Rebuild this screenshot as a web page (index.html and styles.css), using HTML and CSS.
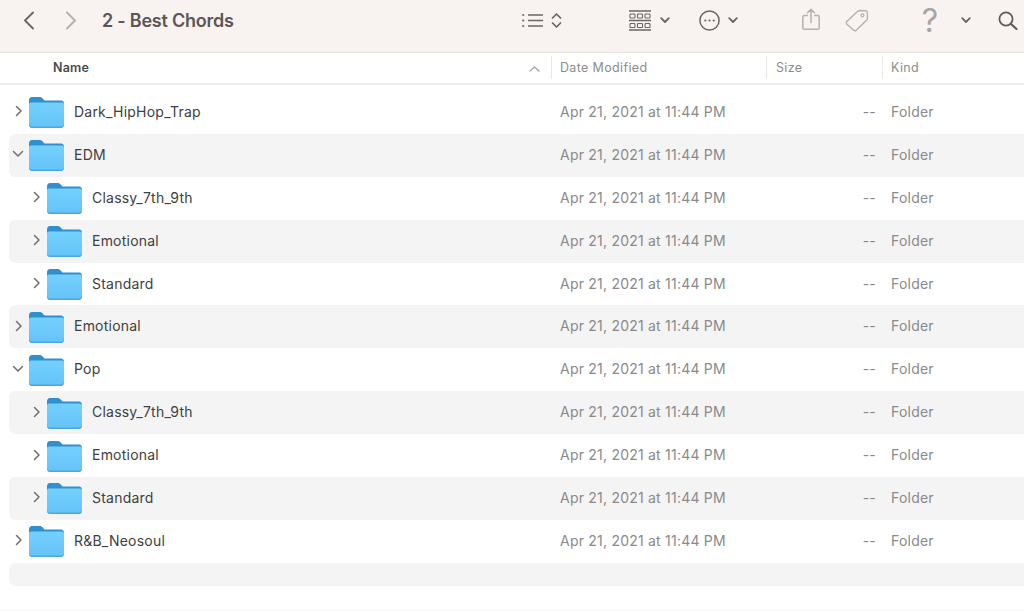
FILE: index.html
```html
<!DOCTYPE html>
<html lang="en">
<head>
<meta charset="utf-8">
<title>2 - Best Chords</title>
<link rel="stylesheet" href="styles.css">
</head>
<body>
<svg class="defs" width="0" height="0" aria-hidden="true">
  <defs>
    <linearGradient id="fg" x1="0" y1="0" x2="0" y2="1">
      <stop offset="0" stop-color="#74d0fd"/>
      <stop offset="1" stop-color="#64c3f8"/>
    </linearGradient>
    <symbol id="folder" viewBox="0 0 35 31">
      <path d="M0 3.500C0 1.500 1.200 0 3 0h7.500c1.600 0 2.400.6 3.400 1.700L15.500 3.500H32c2 0 3 1.300 3 3.500V27c0 2.500-1.500 4-3.500 4h-28C1.500 31 0 29.500 0 27z" fill="#2f8fcf"/>
      <path d="M0 7.500C0 6.300.8 5.500 2 5.500h31c1.200 0 2 .8 2 2V27c0 2.500-1.500 4-3.500 4h-28C1.500 31 0 29.500 0 27z" fill="url(#fg)"/>
      <path d="M0 27.500v-.5c0 1.800 1.500 2.500 3 2.500h29c1.500 0 3-.7 3-2.500v.5c0 2-1.500 3.500-3.500 3.500h-28C1.500 31 0 29.500 0 27.500z" fill="#4fa5dc"/>
    </symbol>
    <symbol id="right" viewBox="0 0 8 12">
      <path d="M1.500 1.500 6 6l-4.500 4.500" fill="none" stroke="#6f6f6f" stroke-width="1.500" stroke-linecap="round" stroke-linejoin="round"/>
    </symbol>
    <symbol id="down" viewBox="0 0 12 8">
      <path d="M1.500 1.500 6 6l4.500-4.500" fill="none" stroke="#6f6f6f" stroke-width="1.500" stroke-linecap="round" stroke-linejoin="round"/>
    </symbol>
    <symbol id="tdown" viewBox="0 0 10 7">
      <path d="M1.200 1.200 5 5l3.800-3.800" fill="none" stroke="#6a6664" stroke-width="1.800" stroke-linecap="round" stroke-linejoin="round"/>
    </symbol>
  </defs>
</svg>

<div class="window">
  <header class="toolbar">
    <svg class="ic back" width="13" height="19" viewBox="0 0 13 19"><path d="M11 1.500 3 9.500l8 8" fill="none" stroke="#6b6765" stroke-width="1.900" stroke-linecap="round" stroke-linejoin="round"/></svg>
    <svg class="ic forward" width="13" height="19" viewBox="0 0 13 19"><path d="M2 1.500l8 8-8 8" fill="none" stroke="#b3afad" stroke-width="1.900" stroke-linecap="round" stroke-linejoin="round"/></svg>
    <h1 class="title">2 - Best Chords</h1>

    <svg class="ic list" width="21" height="15" viewBox="0 0 21 15"><g fill="none" stroke="#6b6765" stroke-width="1.400"><path d="M6 2h15M6 7.500h15M6 13h15"/></g><g fill="#6b6765"><circle cx="1.200" cy="2" r="1.100"/><circle cx="1.200" cy="7.500" r="1.100"/><circle cx="1.200" cy="13" r="1.100"/></g></svg>
    <svg class="ic updown" width="11" height="17" viewBox="0 0 11 17"><path d="M1.500 6 5.500 2l4 4M1.500 11l4 4 4-4" fill="none" stroke="#6b6765" stroke-width="1.700" stroke-linecap="round" stroke-linejoin="round"/></svg>

    <svg class="ic gallery" width="22" height="21" viewBox="0 0 22 21"><g fill="none" stroke="#6b6765"><path d="M0 1h22M0 10.500h22M0 20h22" stroke-width="1.300"/><g stroke-width="1.100"><rect x="1" y="4" width="5" height="4" rx=".8"/><rect x="8.500" y="4" width="5" height="4" rx=".8"/><rect x="16" y="4" width="5" height="4" rx=".8"/><rect x="1" y="13.500" width="5" height="4" rx=".8"/><rect x="8.500" y="13.500" width="5" height="4" rx=".8"/><rect x="16" y="13.500" width="5" height="4" rx=".8"/></g></g></svg>
    <svg class="ic chev gallery-chev" width="10" height="7"><use href="#tdown"/></svg>

    <svg class="ic more" width="21" height="21" viewBox="0 0 21 21"><circle cx="10.500" cy="10.500" r="9.600" fill="none" stroke="#6b6765" stroke-width="1.500"/><g fill="#6b6765"><circle cx="6.300" cy="10.500" r="1.100"/><circle cx="10.500" cy="10.500" r="1.100"/><circle cx="14.700" cy="10.500" r="1.100"/></g></svg>
    <svg class="ic chev more-chev" width="10" height="7"><use href="#tdown"/></svg>

    <svg class="ic share" width="18" height="22" viewBox="0 0 18 22"><path d="M5.500 7.500H2.500C1.400 7.500 .8 8.100 .8 9.200v10.500c0 1 .6 1.500 1.700 1.500h13c1.100 0 1.700-.5 1.700-1.500V9.200c0-1.100-.6-1.700-1.700-1.700h-3M9 14.500V1.500M5.500 4.800 9 1.200l3.500 3.600" fill="none" stroke="#b5b1af" stroke-width="1.500" stroke-linecap="round" stroke-linejoin="round"/></svg>
    <svg class="ic tag" width="24" height="23" viewBox="0 0 24 23"><path d="M1.800 12.600 12.800 2.200c.5-.5 1-.7 1.700-.7l6 .3c1 0 1.700.7 1.800 1.700l.2 5.700c0 .7-.2 1.300-.7 1.800L11.200 21.200c-.7.700-1.700.7-2.400 0L1.700 15c-.7-.7-.6-1.700.1-2.400z" fill="none" stroke="#b5b1af" stroke-width="1.400" stroke-linejoin="round"/><circle cx="17.500" cy="6.300" r="1.500" fill="none" stroke="#b5b1af" stroke-width="1.200"/></svg>

    <span class="help">?</span>
    <svg class="ic chev help-chev" width="10" height="7"><use href="#tdown"/></svg>
    <svg class="ic search" width="20" height="19" viewBox="0 0 20 19"><circle cx="8" cy="8" r="6.600" fill="none" stroke="#5f5b59" stroke-width="1.800"/><path d="M13 13l5.500 5" fill="none" stroke="#5f5b59" stroke-width="2.200" stroke-linecap="round"/></svg>
  </header>

  <div class="colhead">
    <span class="col-name">Name<svg class="sort" width="11" height="6" viewBox="0 0 11 6"><path d="M1 5 5.500 1 10 5" fill="none" stroke="#a5a5a5" stroke-width="1.300" stroke-linecap="round" stroke-linejoin="round"/></svg></span>
    <span class="col-date">Date Modified</span>
    <span class="col-size">Size</span>
    <span class="col-kind">Kind</span>
  </div>

  <main class="list-body">
    <div class="row"><span class="name"><svg class="arrow" width="8" height="12"><use href="#right"/></svg><svg class="folder" width="35" height="31"><use href="#folder"/></svg>Dark_HipHop_Trap</span><span class="date">Apr 21, 2021 at 11:44 PM</span><span class="size">--</span><span class="kind">Folder</span></div>
    <div class="row alt"><span class="name"><svg class="arrow open" width="12" height="8"><use href="#down"/></svg><svg class="folder" width="35" height="31"><use href="#folder"/></svg>EDM</span><span class="date">Apr 21, 2021 at 11:44 PM</span><span class="size">--</span><span class="kind">Folder</span></div>
    <div class="row"><span class="name sub"><svg class="arrow" width="8" height="12"><use href="#right"/></svg><svg class="folder" width="35" height="31"><use href="#folder"/></svg>Classy_7th_9th</span><span class="date">Apr 21, 2021 at 11:44 PM</span><span class="size">--</span><span class="kind">Folder</span></div>
    <div class="row alt"><span class="name sub"><svg class="arrow" width="8" height="12"><use href="#right"/></svg><svg class="folder" width="35" height="31"><use href="#folder"/></svg>Emotional</span><span class="date">Apr 21, 2021 at 11:44 PM</span><span class="size">--</span><span class="kind">Folder</span></div>
    <div class="row"><span class="name sub"><svg class="arrow" width="8" height="12"><use href="#right"/></svg><svg class="folder" width="35" height="31"><use href="#folder"/></svg>Standard</span><span class="date">Apr 21, 2021 at 11:44 PM</span><span class="size">--</span><span class="kind">Folder</span></div>
    <div class="row alt"><span class="name"><svg class="arrow" width="8" height="12"><use href="#right"/></svg><svg class="folder" width="35" height="31"><use href="#folder"/></svg>Emotional</span><span class="date">Apr 21, 2021 at 11:44 PM</span><span class="size">--</span><span class="kind">Folder</span></div>
    <div class="row"><span class="name"><svg class="arrow open" width="12" height="8"><use href="#down"/></svg><svg class="folder" width="35" height="31"><use href="#folder"/></svg>Pop</span><span class="date">Apr 21, 2021 at 11:44 PM</span><span class="size">--</span><span class="kind">Folder</span></div>
    <div class="row alt"><span class="name sub"><svg class="arrow" width="8" height="12"><use href="#right"/></svg><svg class="folder" width="35" height="31"><use href="#folder"/></svg>Classy_7th_9th</span><span class="date">Apr 21, 2021 at 11:44 PM</span><span class="size">--</span><span class="kind">Folder</span></div>
    <div class="row"><span class="name sub"><svg class="arrow" width="8" height="12"><use href="#right"/></svg><svg class="folder" width="35" height="31"><use href="#folder"/></svg>Emotional</span><span class="date">Apr 21, 2021 at 11:44 PM</span><span class="size">--</span><span class="kind">Folder</span></div>
    <div class="row alt"><span class="name sub"><svg class="arrow" width="8" height="12"><use href="#right"/></svg><svg class="folder" width="35" height="31"><use href="#folder"/></svg>Standard</span><span class="date">Apr 21, 2021 at 11:44 PM</span><span class="size">--</span><span class="kind">Folder</span></div>
    <div class="row"><span class="name"><svg class="arrow" width="8" height="12"><use href="#right"/></svg><svg class="folder" width="35" height="31"><use href="#folder"/></svg>R&amp;B_Neosoul</span><span class="date">Apr 21, 2021 at 11:44 PM</span><span class="size">--</span><span class="kind">Folder</span></div>
    <div class="row alt tail"></div>
  </main>
</div>
</body>
</html>
```

FILE: styles.css
```css
html, body {
  margin: 0;
  padding: 0;
  height: 100%;
  background: #fff;
  overflow: hidden;
}

body {
  font-family: Inter, "Liberation Sans", sans-serif;
  color: #3f3f3f;
}

.defs {
  display: block;
  height: 0;
}

.window {
  width: 1024px;
  height: 611px;
  display: flex;
  flex-direction: column;
  border-bottom: 1px solid #f4f4f4;
  box-sizing: border-box;
}

.toolbar {
  height: 53px;
  box-sizing: border-box;
  flex: none;
  display: flex;
  align-items: center;
  background: #f8f3f1;
  border-bottom: 1px solid #e8e4e2;
  padding-bottom: 11px;
}

.ic { flex: none; display: block; }
.back { margin-left: 22px; }
.forward { margin-left: 30px; }

.title {
  margin: 0 0 0 24px;
  width: 420px;
  flex: none;
  font-size: 18px;
  font-weight: 600;
  color: #5b5755;
  line-height: 22px;
  letter-spacing: -0.23px;
}

.list { margin-top: -1px; }
.updown { margin-left: 8px; margin-top: -1px; }
.gallery { margin-left: 67px; margin-top: -1px; }
.gallery-chev { margin-left: 9px; }
.more { margin-left: 29px; }
.more-chev { margin-left: 8px; }
.share { margin-left: 64px; margin-top: -3px; }
.tag { margin-left: 25px; }

.help {
  flex: none;
  width: 20px;
  margin-left: 51px;
  font-size: 32px;
  line-height: 28px;
  font-weight: 400;
  text-align: center;
  color: #a9a5a3;
}

.help-chev { margin-left: 21px; }
.search { margin-left: 27px; }

.colhead {
  height: 32px;
  box-sizing: border-box;
  flex: none;
  display: grid;
  grid-template-columns: 551px 215px 116px 1fr;
  align-items: center;
  border-bottom: 2px solid #efefef;
  font-size: 12.500px;
  letter-spacing: 0.35px;
  color: #8d8d8d;
  padding-bottom: 1px;
}

.colhead > span {
  height: 23px;
  line-height: 23px;
  box-sizing: border-box;
  display: flex;
  align-items: center;
}

.col-name {
  padding-left: 53px;
  padding-right: 11px;
  justify-content: space-between;
  font-weight: 600;
  color: #4a4a4a;
  letter-spacing: 0.2px;
}

.sort { margin-top: 3px; }

.col-date, .col-size, .col-kind { border-left: 1px solid #e9e9e9; }
.col-date { padding-left: 8px; }
.col-size { padding-left: 9px; }
.col-kind { padding-left: 8px; }

.list-body {
  flex: none;
  padding-top: 6px;
  padding-left: 9px;
}

.row {
  height: 42.900px;
  box-sizing: border-box;
  padding-bottom: 2px;
  display: grid;
  grid-template-columns: 551px 235px 81px 1fr;
  align-items: center;
  font-size: 14px;
  letter-spacing: 0.22px;
  border-radius: 6px 0 0 6px;
}

.alt { background: #f4f4f4; }
.tail { height: 23px; margin-top: 0; padding-bottom: 0; }

.name {
  display: flex;
  align-items: center;
  color: #404040;
  padding-left: 6px;
}

.name.sub { padding-left: 24px; }

.arrow { flex: none; width: 8px; margin-right: 6px; }
.arrow.open { width: 12px; margin-left: -3px; margin-right: 5px; }
.folder { flex: none; margin-right: 10px; margin-top: 3px; }

.date, .size, .kind { color: #8a8a8a; }
.size { text-align: right; }
.kind { padding-left: 15px; }
```
